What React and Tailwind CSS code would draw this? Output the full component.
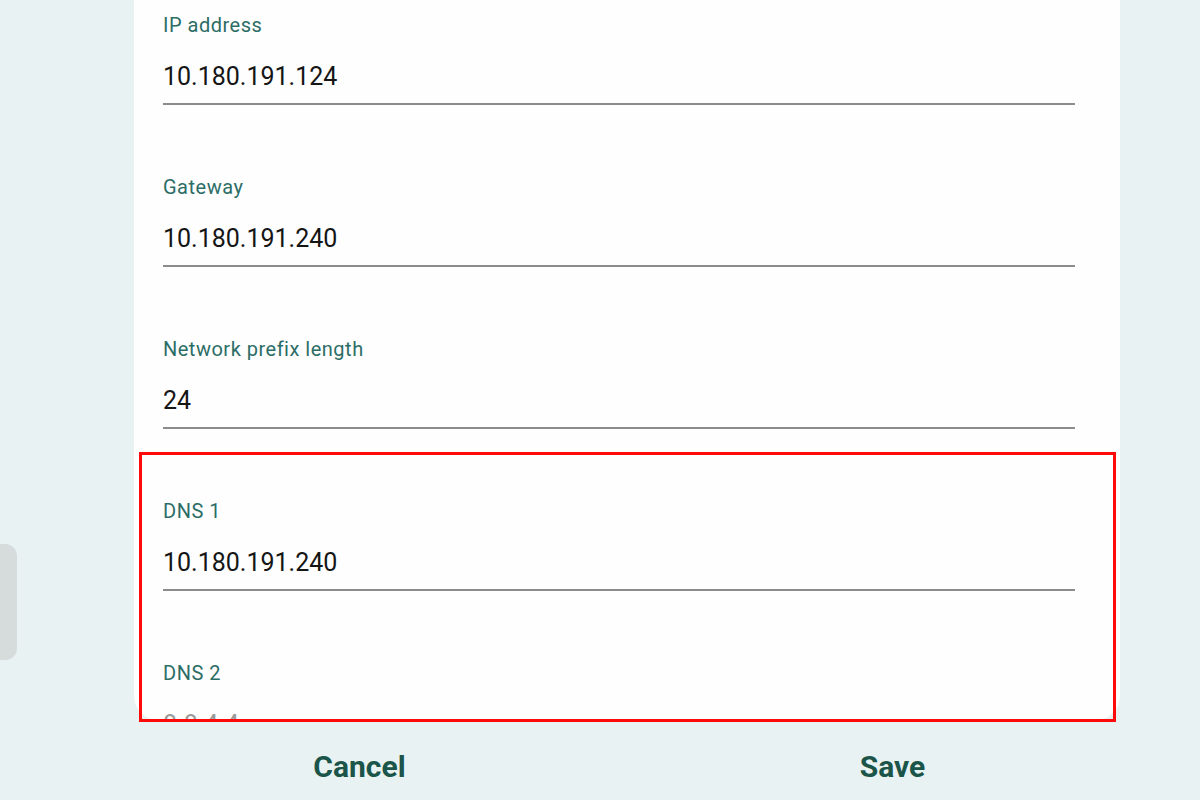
const fields = [
  { label: 'IP address', value: '10.180.191.124' },
  { label: 'Gateway', value: '10.180.191.240' },
  { label: 'Network prefix length', value: '24' },
  { label: 'DNS 1', value: '10.180.191.240' },
  { label: 'DNS 2', value: '8.8.4.4', hint: true },
];

const Field = ({ label, value, hint, first }) => (
  <div className={first ? '' : 'mt-[70px]'}>
    <div className="text-[20px] leading-[24px] tracking-[0.5px] text-[#2c6d66]">{label}</div>
    <div
      className={`mt-[24px] pb-[10px] border-b-2 border-[#8c8c8c] text-[25px] leading-[32px] ${
        hint ? 'text-[#9a9a9a]' : 'text-[#151515]'
      }`}
    >
      {value}
    </div>
  </div>
);

export default function App() {
  return (
    <div
      className="relative w-[1200px] h-[800px] overflow-hidden bg-[#e9f2f2] flex items-start"
      style={{ fontFamily: 'Roboto, "Noto Sans", sans-serif' }}
    >
      {/* edge handle */}
      <div className="mt-[544px] w-[17px] h-[116px] rounded-r-[12px] bg-[#d6dcdc] shrink-0" />

      <div className="flex flex-col">
        {/* dialog body */}
        <div className="ml-[117px] w-[986px] h-[720px] overflow-hidden rounded-b-[24px] bg-[#fefefe] pl-[29px] pr-[45px] pt-[13px]">
          {fields.map((f, i) => (
            <Field key={f.label} {...f} first={i === 0} />
          ))}
        </div>

        {/* actions */}
        <div className="mt-[29px] ml-[76px] flex">
          <button className="w-[533px] text-center text-[30px] leading-[36px] font-bold text-[#1b5449]">
            Cancel
          </button>
          <button className="w-[533px] text-center text-[30px] leading-[36px] font-bold text-[#1b5449]">
            Save
          </button>
        </div>
      </div>

      {/* highlight box */}
      <div className="absolute left-[139px] top-[452px] w-[977px] h-[270px] border-[3px] border-[#ff0a0a]" />
    </div>
  );
}
